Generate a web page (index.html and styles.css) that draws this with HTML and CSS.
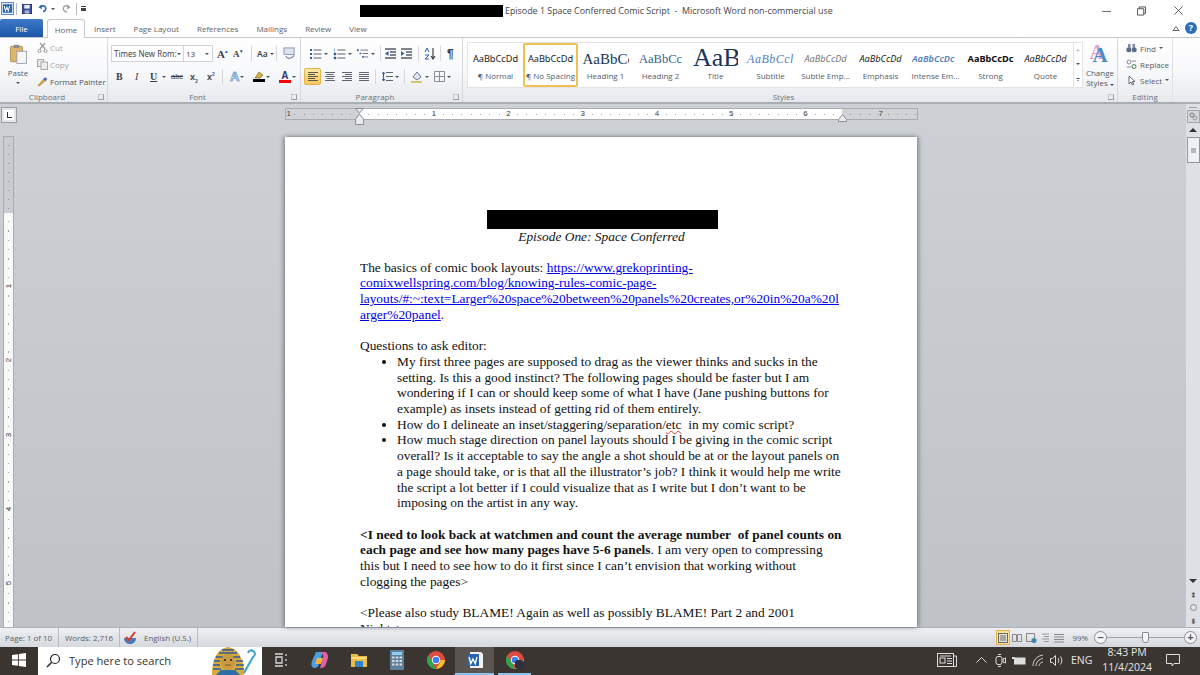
FILE: index.html
```html
<!DOCTYPE html>
<html lang="en">
<head>
    <meta charset="UTF-8">
    <title>Episode 1 Space Conferred Comic Script - Microsoft Word</title>
    <link rel="stylesheet" href="styles.css">
</head>
<body>
    <div class="titlebar">
        <div class="qat">
            <svg class="w-logo" width="13" height="13" viewBox="0 0 14 14"><rect x="0.5" y="0.5" width="13" height="13" fill="#dfe9f6" stroke="#5b86bd"/><rect x="2" y="2.5" width="10" height="9" fill="#2a62ad"/><path d="M3.5 4.5l1.3 5 1.6-4 1.4 4 1.5-5" fill="none" stroke="#fff" stroke-width="1.1"/></svg>
            <span class="qat-sep"></span>
            <svg class="qat-save" width="10" height="10" viewBox="0 0 11 11"><rect x="0.5" y="0.5" width="10" height="10" fill="#3d4f9e" stroke="#2a3570"/><rect x="2.5" y="1" width="6" height="4" fill="#e8ecf6"/><rect x="3" y="7" width="5" height="3.5" fill="#a9b3d3"/></svg>
            <svg class="qat-undo" width="9" height="9" viewBox="0 0 11 10"><path d="M3 2.5c3-1.6 6.5-.6 6.5 2.5 0 2-1.300 3.300-3.300 4" fill="none" stroke="#2e64ad" stroke-width="2"/><path d="M0.500 3.500L4.500 0V6z" fill="#2e64ad"/></svg>
            <span class="caret dark"></span>
            <svg class="qat-redo" width="9" height="9" viewBox="0 0 10 10"><path d="M7.500 2.500C4.500 .8 1.500 2.200 1.500 5c0 2.400 2 3.800 4.300 3.800" fill="none" stroke="#9c9fa3" stroke-width="1.500"/><path d="M9.500 3.500L5.500 .5V6z" fill="#9c9fa3"/></svg>
            <span class="qat-sep wide"></span>
            <span class="qat-more"></span>
        </div>
        <div class="redact-title"></div>
        <div class="doc-title">Episode 1 Space Conferred Comic Script&nbsp; -&nbsp; Microsoft Word non-commercial use</div>
        <div class="winctl">
            <svg class="ctl-min" width="9" height="10" viewBox="0 0 10 10"><path d="M0 5.500h10" stroke="#555" stroke-width="1"/></svg>
            <svg class="ctl-max" width="9" height="10" viewBox="0 0 10 10"><path d="M2.500 2.500V.5h7v7h-2M.5 2.500h7v7h-7z" fill="none" stroke="#444"/></svg>
            <svg class="ctl-close" width="9" height="9" viewBox="0 0 11 11"><path d="M.5 .5l10 10M10.500 .5l-10 10" stroke="#444"/></svg>
        </div>
    </div>

    <div class="tabs">
        <div class="tab-file">File</div>
        <div class="tab active">Home</div>
        <div class="tab">Insert</div>
        <div class="tab">Page Layout</div>
        <div class="tab">References</div>
        <div class="tab">Mailings</div>
        <div class="tab">Review</div>
        <div class="tab">View</div>
        <div class="tab-right">
            <svg width="8" height="7" viewBox="0 0 8 7"><path d="M1 5.500L4 1.500l3 4z" fill="none" stroke="#666"/></svg>
            <span class="help">?</span>
        </div>
    </div>

    <div class="ribbon">
        <section class="group g-clip">
            <div class="group-body clip-body">
                <div class="paste">
                    <svg width="19" height="21" viewBox="0 0 22 26"><rect x="1" y="3" width="15" height="19" rx="1" fill="#dcb46a" stroke="#a8843f"/><rect x="5" y="1" width="7" height="4" fill="#8d8d8d"/><rect x="9" y="9" width="12" height="15" fill="#f5f6f8" stroke="#8f96a3"/></svg>
                    <span class="paste-label">Paste</span>
                    <span class="caret dark"></span>
                </div>
                <div class="clip-list">
                    <div class="clip-item muted"><svg width="11" height="11" viewBox="0 0 11 11"><path d="M3 1l5 6M8 1L3 7" stroke="#999" stroke-width="1.200"/><circle cx="2.500" cy="9" r="1.500" fill="none" stroke="#999"/><circle cx="8.500" cy="9" r="1.500" fill="none" stroke="#999"/></svg>Cut</div>
                    <div class="clip-item muted"><svg width="11" height="11" viewBox="0 0 11 11"><rect x="0.500" y="0.500" width="6" height="7" fill="#e6e6e6" stroke="#aaa"/><rect x="4" y="3" width="6.500" height="7.500" fill="#eee" stroke="#aaa"/></svg>Copy</div>
                    <div class="clip-item"><svg width="11" height="11" viewBox="0 0 13 12"><path d="M1 11L7 4l2 2-6 5z" fill="#e0a92f" stroke="#8a6a20" stroke-width=".5"/><path d="M7 3l3-2 2 2-2 3z" fill="#4a6aa8"/></svg>Format Painter</div>
                </div>
            </div>
            <div class="group-label">Clipboard<span class="launch"></span></div>
        </section>

        <section class="group g-font">
            <div class="group-body tool-rows">
                <div class="tool-row font-row-1">
                    <div class="combo font-name">Times New Rom:<span class="caret dark"></span></div>
                    <div class="combo font-size">13<span class="caret dark"></span></div>
                    <div class="glyph grow">A<sup>▴</sup></div>
                    <div class="glyph shrink">A<sup>▾</sup></div>
                    <div class="tool-sep"></div>
                    <div class="glyph change-case">Aa<span class="caret dark"></span></div>
                    <div class="tool-sep"></div>
                    <svg class="clear-fmt" width="13" height="13" viewBox="0 0 14 14"><rect x="1" y="1" width="11" height="7" fill="#dfe3f0" stroke="#8a94b5"/><path d="M3 10c2 3 6 3 9-1" fill="none" stroke="#6b7ba8" stroke-width="1.300"/></svg>
                </div>
                <div class="tool-row font-row-2">
                    <b class="fmt f-b">B</b>
                    <i class="fmt f-i">I</i>
                    <span class="fmt f-u">U</span><span class="caret dark"></span>
                    <span class="fmt f-abc">abc</span>
                    <span class="fmt f-x">x<sub>2</sub></span>
                    <span class="fmt f-x">x<sup>2</sup></span>
                    <div class="tool-sep"></div>
                    <span class="fmt f-effect">A</span><span class="caret dark"></span>
                    <span class="swatch-tool"><svg width="12" height="8" viewBox="0 0 12 8"><path d="M2 7l4-6 4 3-3 3z" fill="#d8b13a" stroke="#6b5a20" stroke-width=".6"/></svg><span class="swatch black"></span></span><span class="caret dark"></span>
                    <span class="swatch-tool a-color"><span class="a-letter">A</span><span class="swatch red"></span></span><span class="caret dark"></span>
                </div>
            </div>
            <div class="group-label">Font<span class="launch"></span></div>
        </section>

        <section class="group g-para">
            <div class="group-body tool-rows">
                <div class="tool-row para-row-1">
                    <svg width="13" height="12" viewBox="0 0 13 12"><use href="#i-list"/></svg><span class="caret dark"></span>
                    <svg width="13" height="12" viewBox="0 0 13 12"><use href="#i-num"/></svg><span class="caret dark"></span>
                    <svg width="12" height="11" viewBox="0 0 14 12"><use href="#i-multi"/></svg><span class="caret dark"></span>
                    <div class="tool-sep"></div>
                    <svg width="11" height="12" viewBox="0 0 11 12"><use href="#i-outdent"/></svg>
                    <svg class="indent-i" width="11" height="12" viewBox="0 0 11 12"><use href="#i-indent"/></svg>
                    <div class="tool-sep s-a"></div>
                    <svg width="12" height="13" viewBox="0 0 12 13"><use href="#i-sort"/></svg>
                    <div class="tool-sep s-b"></div>
                    <span class="pilcrow">¶</span>
                </div>
                <div class="tool-row para-row-2">
                    <span class="align on"><svg width="10" height="9" viewBox="0 0 10 9"><use href="#i-left"/></svg></span>
                    <span class="align"><svg width="10" height="9" viewBox="0 0 10 9"><use href="#i-center"/></svg></span>
                    <span class="align"><svg width="10" height="9" viewBox="0 0 10 9"><use href="#i-right"/></svg></span>
                    <span class="align"><svg width="10" height="9" viewBox="0 0 10 9"><use href="#i-just"/></svg></span>
                    <div class="tool-sep"></div>
                    <svg width="11" height="11" viewBox="0 0 11 11"><use href="#i-spacing"/></svg><span class="caret dark"></span>
                    <div class="tool-sep"></div>
                    <svg width="13" height="12" viewBox="0 0 13 12"><path d="M3 6l4-5 4 5-4 3z" fill="#dfe8f2" stroke="#6c7a8f"/><path d="M1 11h11" stroke="#d9c36c" stroke-width="2"/></svg><span class="caret dark"></span>
                    <svg width="11" height="11" viewBox="0 0 11 11"><path d="M.5 .5h10v10H.5zM5.500 .5v10M.5 5.500h10" fill="none" stroke="#8a8f97"/></svg><span class="caret dark"></span>
                </div>
            </div>
            <div class="group-label">Paragraph<span class="launch"></span></div>
        </section>

        <section class="group g-styles">
            <div class="group-body styles-body">
                <div class="gallery">
                    <div class="style-item"><span class="s-sample s-normal">AaBbCcDd</span><span class="s-name">¶ Normal</span></div>
                    <div class="style-item selected"><span class="s-sample s-normal">AaBbCcDd</span><span class="s-name">¶ No Spacing</span></div>
                    <div class="style-item"><span class="s-sample s-h1">AaBbCc</span><span class="s-name">Heading 1</span></div>
                    <div class="style-item"><span class="s-sample s-h2">AaBbCc</span><span class="s-name">Heading 2</span></div>
                    <div class="style-item"><span class="s-sample s-title">AaB</span><span class="s-name">Title</span></div>
                    <div class="style-item"><span class="s-sample s-sub">AaBbCcl</span><span class="s-name">Subtitle</span></div>
                    <div class="style-item"><span class="s-sample s-subtle">AaBbCcDd</span><span class="s-name">Subtle Emp...</span></div>
                    <div class="style-item"><span class="s-sample s-emph">AaBbCcDd</span><span class="s-name">Emphasis</span></div>
                    <div class="style-item"><span class="s-sample s-intense">AaBbCcDc</span><span class="s-name">Intense Em...</span></div>
                    <div class="style-item"><span class="s-sample s-strong">AaBbCcDc</span><span class="s-name">Strong</span></div>
                    <div class="style-item"><span class="s-sample s-emph">AaBbCcDd</span><span class="s-name">Quote</span></div>
                    <div class="gallery-arrows"><span class="caret up"></span><span class="caret dark"></span><span class="caret more"></span></div>
                </div>
                <div class="change-styles">
                    <span class="cs-icon">A</span>
                    <span>Change</span>
                    <span>Styles <i class="caret dark"></i></span>
                </div>
            </div>
            <div class="group-label">Styles<span class="launch"></span></div>
        </section>

        <section class="group g-edit">
            <div class="group-body edit-list">
                <div><svg width="11" height="10" viewBox="0 0 11 10"><circle cx="2.800" cy="6.800" r="2.500" fill="#5a6b86"/><circle cx="8.200" cy="6.800" r="2.500" fill="#5a6b86"/><rect x="2" y="1" width="2.500" height="4" fill="#7c8ba3"/><rect x="6.500" y="1" width="2.500" height="4" fill="#7c8ba3"/></svg>Find <i class="caret dark"></i></div>
                <div><svg width="11" height="10" viewBox="0 0 11 10"><circle cx="3" cy="3" r="2" fill="none" stroke="#889"/><circle cx="8" cy="7.500" r="2" fill="none" stroke="#3a8a4a"/><path d="M1 8h4M6 2h4" stroke="#889"/></svg>Replace</div>
                <div><svg width="11" height="11" viewBox="0 0 11 11"><path d="M3 1v8l2-2 1.500 3 1.200-.6L6.300 6.500H9z" fill="#fff" stroke="#667"/></svg>Select <i class="caret dark"></i></div>
            </div>
            <div class="group-label">Editing</div>
        </section>
    </div>

    <div class="workspace">
        <aside class="vbar">
            <div class="corner"><span></span></div>
            <div class="vruler">
                <div class="vr-top"></div>
                <div class="vr-white">
                    <span class="vn">1</span><span class="vn">2</span><span class="vn">3</span><span class="vn">4</span><span class="vn">5</span>
                </div>
            </div>
        </aside>

        <main class="canvas">
            <div class="hruler">
                <span class="hr-grey"><b class="hn first">1</b></span>
                <span class="hr-white">
                    <b class="hn">1</b><b class="hn">2</b><b class="hn">3</b><b class="hn">4</b><b class="hn">5</b><b class="hn">6</b>
                </span>
                <span class="hr-grey end"><b class="hn last">7</b></span>
                <svg class="marker m-left" width="9" height="18" viewBox="0 0 9 18"><path d="M.5 .5h8L4.500 5zM4.500 6l4 5v5.500h-8V11z" fill="#e9ebee" stroke="#8b8f96"/></svg>
                <svg class="marker m-right" width="9" height="8" viewBox="0 0 9 8"><path d="M4.500 .5l4 5v2h-8v-2z" fill="#e9ebee" stroke="#8b8f96"/></svg>
            </div>
            <article class="page">
                <div class="redact-heading"></div>
                <p class="doc-sub">Episode One: Space Conferred</p>
                <p class="doc-p">The basics of comic book layouts: <a href="#">https://www.grekoprinting-<br>comixwellspring.com/blog/knowing-rules-comic-page-<br>layouts/#:~:text=Larger%20space%20between%20panels%20creates,or%20in%20a%20l<br>arger%20panel</a>.</p>
                <p class="doc-p gap">Questions to ask editor:</p>
                <ul class="doc-list">
                    <li>My first three pages are supposed to drag as the viewer thinks and sucks in the<br>setting. Is this a good instinct? The following pages should be faster but I am<br>wondering if I can or should keep some of what I have (Jane pushing buttons for<br>example) as insets instead of getting rid of them entirely.</li>
                    <li>How do I delineate an inset/staggering/separation/<span class="squiggle">etc</span>&nbsp; in my comic script?</li>
                    <li>How much stage direction on panel layouts should I be giving in the comic script<br>overall? Is it acceptable to say the angle a shot should be at or the layout panels on<br>a page should take, or is that all the illustrator’s job? I think it would help me write<br>the script a lot better if I could visualize that as I write but I don’t want to be<br>imposing on the artist in any way.</li>
                </ul>
                <p class="doc-p gap"><b>&lt;I need to look back at watchmen and count the average number&nbsp; of panel counts on<br>each page and see how many pages have 5-6 panels</b>. I am very open to compressing<br>this but I need to see how to do it first since I can’t envision that working without<br>clogging the pages&gt;</p>
                <p class="doc-p gap">&lt;Please also study BLAME! Again as well as possibly BLAME! Part 2 and 2001<br>Nights&gt;</p>
            </article>
        </main>

        <aside class="scrollbar">
            <div class="sb-grip"></div>
            <div class="sb-toggle"><svg width="9" height="9" viewBox="0 0 9 9"><circle cx="3" cy="3" r="2" fill="none" stroke="#777"/><circle cx="6" cy="6" r="2" fill="none" stroke="#999"/></svg></div>
            <span class="sb-arrow up"></span>
            <div class="sb-thumb"><span></span></div>
            <div class="sb-track"></div>
            <span class="sb-arrow down"></span>
            <span class="sb-nav">⇞</span>
            <span class="sb-nav dot"></span>
            <span class="sb-nav">⇟</span>
        </aside>
    </div>

    <div class="statusbar">
        <span class="st-cell">Page: 1 of 10</span>
        <span class="st-cell">Words: 2,716</span>
        <span class="st-cell lang">
            <svg width="14" height="14" viewBox="0 0 14 14"><path d="M1 7c0 4 3 6 6 6 3 0 6-2 6-6z" fill="#4e79b8"/><path d="M3 6l3 3 6-8" fill="none" stroke="#d8392c" stroke-width="2"/></svg>
            English (U.S.)
        </span>
        <div class="st-right">
            <span class="view on"><svg width="10" height="10" viewBox="0 0 10 10"><use href="#i-view"/></svg></span>
            <span class="view"><svg width="10" height="10" viewBox="0 0 10 10"><path d="M.5 1.500h4v7h-4zM5.500 1.500h4v7h-4z" fill="none" stroke="#888"/></svg></span>
            <span class="view"><svg width="11" height="10" viewBox="0 0 11 10"><path d="M.5 .5h8v8h-8z" fill="none" stroke="#888"/><circle cx="8" cy="7.500" r="2.500" fill="#3c87a8"/></svg></span>
            <span class="view"><svg width="10" height="10" viewBox="0 0 10 10"><path d="M2 1h7M4 3.500h5M2 6h7M4 8.500h5" stroke="#999"/></svg></span>
            <span class="view"><svg width="10" height="10" viewBox="0 0 10 10"><path d="M0 1.500h10M0 4h10M0 6.500h10M0 9h10" stroke="#888"/></svg></span>
            <span class="zoom-pct">99%</span>
            <span class="zoom-btn">–</span>
            <span class="zoom-track"><i></i></span>
            <span class="zoom-btn">+</span>
        </div>
    </div>

    <footer class="taskbar">
        <div class="start"><svg width="14" height="14" viewBox="0 0 16 16"><path d="M0 2.300l6.800-1v6.200H0zM7.800 1.100L16 0v7.500H7.800zM0 8.500h6.800v6.200l-6.800-1zM7.800 8.500H16V16l-8.200-1.100z" fill="#fff"/></svg></div>
        <div class="search">
            <svg width="15" height="15" viewBox="0 0 15 15"><circle cx="9" cy="6" r="4.500" fill="none" stroke="#222" stroke-width="1.200"/><path d="M5.800 9.200L1 14" stroke="#222" stroke-width="1.400"/></svg>
            <span class="search-text">Type here to search</span>
            <svg class="pharaoh" width="48" height="28" viewBox="0 0 48 28">
                <path d="M2 28C2 14 6 2 18 0c12 2 16 14 16 28z" fill="#d9a93a"/>
                <path d="M6 10l24 0M4 14l6 0M26 14l7 0M3 18l7 0M26 18l8 0M3 22l8 0M25 22l9 0M9 6l18 0M12 3l12 0" stroke="#2b5a9e" stroke-width="1.500"/>
                <ellipse cx="18" cy="15" rx="7" ry="8" fill="#c99a3f"/>
                <circle cx="15" cy="13" r="1.100" fill="#222"/><circle cx="21" cy="13" r="1.100" fill="#222"/>
                <path d="M15 18h6" stroke="#7a5a20"/>
                <path d="M6 28l5-5h14l5 5z" fill="#2d6ea8"/>
                <path d="M38 6a3.500 3.500 0 1 1 5 4L34 26" fill="none" stroke="#39a3c8" stroke-width="2"/>
            </svg>
        </div>
        <div class="tb-icons">
            <span class="tb"><svg width="14" height="14" viewBox="0 0 14 14"><path d="M1 1h8M1 13h8M2 4h6v6H2zM12 1v2M12 6v2M12 11v2" fill="none" stroke="#d8d8d8" stroke-width="1.300"/></svg></span>
            <span class="tb"><svg width="20" height="20" viewBox="0 0 20 20"><path d="M6 2h7l-4 12c-1 3-2 4-5 4-3-1-3-4-2-7z" fill="#4aa0e0"/><path d="M8 2h6c3 0 4 2 4 6l-2 6c-1 3-3 4-6 4l3-10c1-3-1-6-5-6z" fill="#e35ea8"/><path d="M7 8h6l-2 6H5z" fill="#f3b33d"/></svg></span>
            <span class="tb"><svg width="18" height="16" viewBox="0 0 18 16"><path d="M1 2h6l2 2h8v11H1z" fill="#e9bd46"/><rect x="5" y="9" width="8" height="6" fill="#2f83cf"/><rect x="1" y="5" width="16" height="2" fill="#f6d980"/></svg></span>
            <span class="tb"><svg width="14" height="20" viewBox="0 0 14 20"><rect width="14" height="20" fill="#5f7f9a"/><rect x="2" y="2" width="10" height="3" fill="#8fd0ee"/><path d="M2 7.500h10M2 11h10M2 14.500h10" stroke="#d5dde4" stroke-width="2" stroke-dasharray="2.500 1.300"/></svg></span>
            <span class="tb"><svg width="18" height="18" viewBox="0 0 18 18"><use href="#i-chrome"/></svg></span>
            <span class="tb word-open"><svg width="18" height="18" viewBox="0 0 18 18"><path d="M4 1h11l2 2v14H4z" fill="#f2f2f2"/><rect x="1" y="3" width="12" height="12" fill="#2a62ad"/><path d="M3 6l1.800 6.500L7 8l2.200 4.500L11 6" fill="none" stroke="#fff" stroke-width="1.400"/></svg></span>
            <span class="tb chrome-open"><svg width="18" height="18" viewBox="0 0 18 18"><use href="#i-chrome"/><rect x="9" y="9" width="9" height="9" rx="3" fill="#2c3140"/></svg></span>
        </div>
        <div class="tray">
            <svg class="tray-news" width="20" height="14" viewBox="0 0 20 14"><rect x=".5" y=".5" width="16" height="13" fill="none" stroke="#ddd"/><path d="M17 3h2.500v10.500H3" fill="none" stroke="#ddd"/><rect x="3" y="5" width="5" height="5" fill="none" stroke="#ddd"/><path d="M10 5.500h5M10 8h5M10 10.500h5M3 3h11" stroke="#ddd"/></svg>
            <svg class="tray-i chev" width="11" height="6" viewBox="0 0 11 6"><path d="M.5 5.500l5-5 5 5" fill="none" stroke="#ddd"/></svg>
            <svg class="tray-i" width="11" height="13" viewBox="0 0 11 13"><rect x="1" y="2.500" width="6" height="8" rx="2" fill="none" stroke="#ddd"/><path d="M8 5l2.500-1v5L8 8zM3 .5h3M3 12.500h3" fill="none" stroke="#ddd"/></svg>
            <svg class="tray-i" width="14" height="9" viewBox="0 0 14 9"><rect x="2" y="1.500" width="11.500" height="7" fill="#ddd"/><path d="M0 1h3v2H0z" fill="#ddd"/></svg>
            <svg class="tray-i" width="12" height="12" viewBox="0 0 12 12"><path d="M1 12C1 6 5 2 11 1M4 12C4 8 7 5 11 4.500M7 12c0-2 2-4 4-4" fill="none" stroke="#cfcfcf"/></svg>
            <svg class="tray-i" width="13" height="11" viewBox="0 0 13 11"><path d="M.5 3.500h2l3-3v10l-3-3h-2zM8 3c1 1.500 1 3.500 0 5M10.500 1.500c1.800 2.500 1.800 5.500 0 8" fill="none" stroke="#ddd"/></svg>
            <span class="tray-lang">ENG</span>
            <div class="clock"><span>8:43 PM</span><span>11/4/2024</span></div>
            <svg class="tray-note" width="14" height="13" viewBox="0 0 14 13"><path d="M.5 .5h13v9H8l-2 2.500V9.500H.5z" fill="none" stroke="#ddd"/></svg>
        </div>
    </footer>

    <svg class="defs" width="0" height="0">
        <defs>
            <g id="i-list"><path d="M4.500 2h8M4.500 6h8M4.500 10h8" stroke="#5b6270"/><path d="M1 1h2v2H1zM1 5h2v2H1zM1 9h2v2H1z" fill="#2f5fa5"/></g>
            <g id="i-num"><path d="M4.500 2h8M4.500 6h8M4.500 10h8" stroke="#5b6270"/><path d="M1.500 .5v3M1 5h2v2H1zM1 9h2v2H1z" fill="#2f5fa5" stroke="#2f5fa5" stroke-width=".5"/></g>
            <g id="i-multi"><path d="M4 2h9M6.500 6h6.500M8.500 10h4.500" stroke="#5b6270"/><path d="M0 1h2v2H0zM3 5h2v2H3zM6 9h2v2H6z" fill="#2f5fa5"/></g>
            <g id="i-outdent"><path d="M0 1h11M5 4h6M5 7h6M0 10h11" stroke="#565c68" stroke-width="1.300"/><path d="M0 5.500L3.500 3v5z" fill="#2f5fa5"/></g>
            <g id="i-indent"><path d="M0 1h11M5 4h6M5 7h6M0 10h11" stroke="#565c68" stroke-width="1.300"/><path d="M3.500 5.500L0 3v5z" fill="#2f5fa5"/></g>
            <g id="i-sort"><path d="M1 5l2-4 2 4M1 8h4l-4 4h4" fill="none" stroke="#2f5fa5"/><path d="M9 1v10M7 9l2 3 2-3" fill="none" stroke="#444" stroke-width="1.200"/></g>
            <g id="i-left"><path d="M0 .5h10M0 2.500h7M0 4.500h10M0 6.500h7M0 8.500h10" stroke="#5e5a4a"/></g>
            <g id="i-center"><path d="M0 .5h10M1.500 2.500h7M0 4.500h10M1.500 6.500h7M0 8.500h10" stroke="#5f6672"/></g>
            <g id="i-right"><path d="M0 .5h10M3 2.500h7M0 4.500h10M3 6.500h7M0 8.500h10" stroke="#5f6672"/></g>
            <g id="i-just"><path d="M0 .5h10M0 2.500h10M0 4.500h10M0 6.500h10M0 8.500h10" stroke="#5f6672"/></g>
            <g id="i-spacing"><path d="M4 1.500h7M4 5.500h7M4 9.500h7" stroke="#5b6270"/><path d="M1.500 1v9M0 3l1.500-2L3 3M0 8l1.500 2L3 8" fill="none" stroke="#2f5fa5"/></g>
            <g id="i-view"><rect x=".5" y=".5" width="9" height="9" fill="#e8e6d8" stroke="#666"/><path d="M2 3h6M2 5h6M2 7h6" stroke="#666"/></g>
            <g id="i-chrome"><circle cx="9" cy="9" r="9" fill="#dd4b3e"/><path d="M9 18A9 9 0 0 1 1.200 4.500L5.500 11z" fill="#2fa44f"/><path d="M9 18l4.500-7.500-1-1.500H18a9 9 0 0 1-9 9z" fill="#f6c01f"/><circle cx="9" cy="9" r="4.200" fill="#fff"/><circle cx="9" cy="9" r="3.300" fill="#3f7fe8"/></g>
        </defs>
    </svg>
</body>
</html>
```

FILE: styles.css
```css
* {
    box-sizing: border-box;
}
html, body {
    margin: 0;
    height: 675px;
    overflow: hidden;
}
body {
    width: 1200px;
    background: #fff;
    font-family: "Open Sans", "Noto Sans", sans-serif;
    font-size: 8px;
    color: #555b66;
}
.defs {
    position: absolute;
}

/* shared bits */
.caret {
    display: inline-block;
    width: 0;
    height: 0;
    border-left: 2px solid transparent;
    border-right: 2px solid transparent;
    border-top: 2.5px solid #666;
    flex: none;
}
.caret.dark {
    border-top-color: #4a4f59;
}
.caret.up {
    border-top: 0;
    border-bottom: 2.5px solid #b5b9c0;
}
.caret.more {
    border-top: 3px double #4a4f59;
}

/* title bar */
.titlebar {
    height: 19px;
    display: flex;
    align-items: center;
    padding-top: 2px;
    background: #fff;
}
.qat {
    width: 360px;
    display: flex;
    align-items: center;
    padding-left: 1px;
    margin-top: -4px;
    flex: none;
}
.qat svg {
    flex: none;
}
.qat-sep {
    width: 1px;
    height: 12px;
    background: #b8bcc4;
    margin: 0 5px 0 2px;
}
.qat-sep.wide {
    margin: 0 4px 0 5px;
}
.qat-save {
    margin-right: 6px;
}
.qat-undo {
    margin-right: 4px;
}
.qat .caret {
    margin-right: 7px;
}
.qat-more {
    width: 5px;
    height: 5px;
    border-top: 1px solid #444;
    border-bottom: 3px solid #444;
}
.redact-title {
    width: 143px;
    height: 12px;
    background: #000;
    flex: none;
}
.doc-title {
    margin-left: 2px;
    margin-top: -1px;
    font-size: 8.9px;
    color: #3f444d;
    white-space: nowrap;
}
.winctl {
    margin-left: auto;
    display: flex;
    align-items: center;
}
.ctl-min {
    margin-right: 26px;
}
.ctl-max {
    margin-right: 28px;
}
.ctl-close {
    margin-right: 17px;
}

/* tabs */
.tabs {
    height: 19px;
    display: flex;
    align-items: stretch;
    border-bottom: 1px solid #c6cad0;
    background: #fff;
    color: #5b616c;
    font-size: 8px;
}
.tab-file {
    width: 43px;
    height: 18px;
    background: linear-gradient(#3f79c8, #1d56a8);
    border-radius: 2px 2px 0 0;
    color: #fff;
    display: flex;
    align-items: center;
    justify-content: center;
}
.tab {
    display: flex;
    align-items: center;
    padding: 1px 9px 0;
}
.tab.active {
    width: 38px;
    margin-left: 4px;
    height: 19px;
    padding: 1px 0 0;
    justify-content: center;
    border: 1px solid #c6cad0;
    border-bottom: 0;
    border-radius: 3px 3px 0 0;
    background: #fff;
    position: relative;
    z-index: 1;
}
.tab-right {
    margin-left: auto;
    display: flex;
    align-items: center;
    gap: 5px;
    padding-right: 3px;
}
.help {
    width: 12px;
    height: 12px;
    border-radius: 50%;
    background: #2f6db8;
    color: #fff;
    font-size: 9px;
    font-weight: 700;
    line-height: 12px;
    text-align: center;
}

/* ribbon */
.ribbon {
    height: 66px;
    display: flex;
    background: linear-gradient(#fff 0, #f7f8fa 55%, #e6e8ec 100%);
    border-bottom: 2px solid #a9adb4;
}
.group {
    display: flex;
    flex-direction: column;
    border-right: 1px solid #d5d8dd;
    flex: none;
}
.g-clip { width: 108px; }
.g-font { width: 193px; }
.g-para { width: 162px; }
.g-styles { width: 655px; }
.g-edit { width: 55px; border-right: 1px solid #dfe1e5; }
.group-body {
    flex: 1;
    min-height: 0;
}
.group-label {
    height: 12px;
    line-height: 12px;
    text-align: center;
    padding-right: 13px;
    color: #6c717b;
    position: relative;
    top: 1px;
}
.g-edit .group-label {
    padding-right: 0;
}
.launch {
    position: absolute;
    right: 3px;
    top: 3px;
    width: 6px;
    height: 6px;
    border: 1px solid #9a9ea6;
    border-top-color: #c5c8cd;
    border-left-color: #c5c8cd;
}

/* clipboard */
.clip-body {
    display: flex;
}
.paste {
    width: 36px;
    flex: none;
    display: flex;
    flex-direction: column;
    align-items: center;
    padding-top: 6px;
    color: #555b66;
}
.paste-label {
    margin: 2px 0 3px;
    line-height: 12px;
}
.clip-list {
    display: flex;
    flex-direction: column;
    padding: 3px 0 0 1px;
    gap: 4px;
    white-space: nowrap;
}
.clip-item {
    height: 13px;
    display: flex;
    align-items: center;
    gap: 2px;
    color: #4f5560;
}
.clip-item.muted {
    color: #a2a6ad;
}

/* font + paragraph tools */
.tool-rows {
    display: flex;
    flex-direction: column;
    padding-top: 7px;
    gap: 6px;
}
.tool-row {
    height: 17px;
    display: flex;
    align-items: center;
}
.tool-row svg {
    flex: none;
}
.tool-sep {
    width: 1px;
    height: 15px;
    background: #d5d8dd;
    flex: none;
}
.font-row-1 {
    padding-left: 3px;
}
.combo {
    height: 17px;
    border: 1px solid #d0d3d9;
    background: #fff;
    display: flex;
    align-items: center;
    justify-content: space-between;
    padding: 0 3px 0 2px;
    color: #444;
    font-size: 8px;
    white-space: nowrap;
    overflow: hidden;
    flex: none;
}
.font-name {
    width: 73px;
    font-family: "Noto Sans", sans-serif;
}
.font-size {
    width: 30px;
    margin-left: -1px;
}
.glyph {
    color: #444;
    font-family: "Liberation Serif", serif;
    font-weight: 700;
    flex: none;
}
.glyph sup {
    color: #2f5fa5;
    font-size: 5px;
    line-height: 0;
}
.grow {
    font-size: 11px;
    margin-left: 4px;
    width: 12px;
}
.shrink {
    font-size: 9px;
    margin: 0 6px 0 4px;
    width: 12px;
}
.change-case {
    font-size: 8.5px;
    font-family: "Noto Sans", sans-serif;
    font-weight: 600;
    margin: 0 2px 0 5px;
    display: flex;
    align-items: center;
    gap: 2px;
}
.clear-fmt {
    margin-left: 6px;
}
.font-row-2 {
    padding-left: 7px;
}
.fmt {
    color: #3d3f45;
    font-family: "Liberation Serif", serif;
    font-size: 10px;
    flex: none;
}
.f-b, .f-i {
    width: 17px;
}
.f-b {
    padding-left: 1px;
}
.f-i {
    padding-left: 3px;
}
.f-u {
    text-decoration: underline;
    font-weight: 700;
    width: 12px;
    padding-left: 1px;
}
.font-row-2 .caret {
    margin: 0 5px 0 1px;
}
.f-abc {
    width: 17px;
    font-family: "Liberation Sans", sans-serif;
    font-size: 7.5px;
    text-decoration: line-through;
}
.f-x {
    width: 17px;
    padding-left: 2px;
    font-family: "Liberation Sans", sans-serif;
    font-weight: 700;
    font-size: 9px;
}
.f-x sub, .f-x sup {
    font-size: 5px;
    color: #2f5fa5;
    line-height: 0;
}
.font-row-2 .tool-sep {
    margin: 0 7px 0 0;
}
.f-effect {
    font-family: "Liberation Sans", sans-serif;
    font-weight: 700;
    font-size: 13px;
    color: #cfe2f6;
    -webkit-text-stroke: 0.6px #3f83c8;
}
.swatch-tool {
    width: 13px;
    display: flex;
    flex-direction: column;
    align-items: center;
    flex: none;
    margin-left: 3px;
}
.swatch {
    width: 12px;
    height: 3px;
}
.swatch.black {
    background: #000;
}
.swatch.red {
    background: #f00;
}
.a-letter {
    font: 700 10px/9px "Liberation Sans", sans-serif;
    color: #2b3a7a;
}
.para-row-1 {
    padding-left: 8px;
}
.para-row-1 .caret {
    margin: 0 5px 0 2px;
}
.para-row-1 .tool-sep {
    margin: 0 4px 0 0;
}
.indent-i {
    margin-left: 5px;
}
.para-row-1 .s-a {
    margin: 0 5px 0 6px;
}
.para-row-1 .s-b {
    margin: 0 0 0 4px;
}
.pilcrow {
    font: 700 12px "Liberation Sans", sans-serif;
    color: #444;
    margin-left: 6px;
}
.para-row-2 {
    padding-left: 3px;
}
.align {
    width: 17px;
    height: 17px;
    display: flex;
    align-items: center;
    justify-content: center;
    flex: none;
}
.align.on {
    background: linear-gradient(#fde9a8, #f8c95b);
    border: 1px solid #e3b44a;
    border-radius: 2px;
}
.para-row-2 .tool-sep {
    margin: 0 6px 0 3px;
}
.para-row-2 .tool-sep + svg + .caret + .tool-sep {
    margin: 0 5px 0 0;
}
.para-row-2 .caret {
    margin: 0 5px 0 2px;
}

/* styles gallery */
.styles-body {
    display: flex;
    padding: 4px 0 2px 4px;
}
.gallery {
    height: 46px;
    width: 616px;
    flex: none;
    display: flex;
    background: #fff;
    border: 1px solid #e2e4e8;
}
.style-item {
    width: 55px;
    height: 44px;
    flex: none;
    display: flex;
    flex-direction: column;
    align-items: center;
    overflow: hidden;
    white-space: nowrap;
}
.style-item.selected {
    box-shadow: inset 0 0 0 2px #f2c153;
    border-radius: 2px;
}
.s-sample {
    height: 26px;
    line-height: 32px;
    font-size: 9.2px;
    color: #222;
    font-family: "Noto Sans", sans-serif;
    flex: none;
}
.s-name {
    line-height: 14px;
    color: #555b66;
}
.s-h1 {
    font-family: "Liberation Serif", serif;
    font-size: 15px;
    color: #17365d;
    width: 46px;
    overflow: hidden;
}
.s-h2 {
    font-family: "Liberation Serif", serif;
    font-size: 12.5px;
    color: #366092;
}
.s-title {
    font-family: "Liberation Serif", serif;
    font-size: 26px;
    color: #17365d;
    line-height: 30px;
    width: 45px;
    overflow: hidden;
}
.s-sub {
    font-family: "Liberation Serif", serif;
    font-style: italic;
    font-size: 12px;
    letter-spacing: .5px;
    color: #4f81bd;
}
.s-subtle {
    font-style: italic;
    color: #777;
}
.s-emph {
    font-style: italic;
    color: #222;
}
.s-intense {
    font-style: italic;
    font-weight: 600;
    color: #4f81bd;
    width: 47px;
    overflow: hidden;
}
.s-strong {
    font-weight: 700;
    color: #111;
}
.gallery-arrows {
    margin-left: auto;
    width: 10px;
    height: 44px;
    display: flex;
    flex-direction: column;
    align-items: center;
    justify-content: space-around;
    border-left: 1px solid #e2e4e8;
}
.change-styles {
    flex: 1;
    display: flex;
    flex-direction: column;
    align-items: center;
    line-height: 10px;
    color: #555b66;
}
.cs-icon {
    font: 700 21px/26px "Liberation Serif", serif;
    color: #4a8ac9;
    text-shadow: -3px -3px 0 rgba(200, 77, 176, .55);
    height: 27px;
}
.edit-list {
    display: flex;
    flex-direction: column;
    padding: 3px 0 0 8px;
    gap: 2px;
}
.edit-list div {
    height: 14px;
    display: flex;
    align-items: center;
    gap: 3px;
    white-space: nowrap;
}

/* workspace */
.workspace {
    height: 523px;
    display: flex;
    background: linear-gradient(#cdd0d5, #bfc2c7);
}
.vbar {
    width: 18px;
    flex: none;
    padding: 3px 0 0 1px;
}
.corner {
    width: 16px;
    height: 16px;
    border: 1px solid #9a9da3;
    padding: 2px;
    background: #e3e5e8;
}
.corner span {
    display: block;
    height: 10px;
    background: #fff;
    position: relative;
}
.corner span::after {
    content: "";
    position: absolute;
    left: 3px;
    top: 2px;
    width: 4px;
    height: 5px;
    border-left: 1.500px solid #333;
    border-bottom: 1.500px solid #333;
}
.vruler {
    width: 11px;
    margin: 13px 0 0 2px;
    height: 491px;
    display: flex;
    flex-direction: column;
    border: 1px solid #a9acb2;
    border-bottom: 0;
}
.vr-top {
    height: 76px;
    flex: none;
    background: repeating-linear-gradient(#c9ccd1 0 8px, #8d9096 8px 9px) center / 1px 100% no-repeat, #c9ccd1;
}
.vr-white {
    flex: 1;
    background: repeating-linear-gradient(#fff 0 8px, #a0a3a8 8px 9.300px) center / 1px 100% no-repeat, #f8f8f9;
    padding-top: 1px;
    overflow: hidden;
}
.vn {
    display: block;
    height: 74.300px;
    width: 9px;
    font: 8px/9px "Liberation Sans", sans-serif;
    color: #444;
    writing-mode: vertical-rl;
    transform: rotate(180deg);
}
.canvas {
    flex: 1;
    min-width: 0;
    padding-left: 267px;
    display: flex;
    flex-direction: column;
}
.hruler {
    width: 633px;
    height: 12px;
    margin-top: 4px;
    flex: none;
    display: flex;
    border: 1px solid #a9acb2;
    position: relative;
    background: #d0d2d6;
}
.hr-grey {
    width: 74px;
    flex: none;
    display: flex;
    background: repeating-linear-gradient(90deg, transparent 0 8.300px, #8d9096 8.300px 9.300px) center / 100% 1px no-repeat;
}
.hr-grey.end {
    flex: 1;
}
.hr-white {
    width: 482px;
    flex: none;
    display: flex;
    padding-left: 2px;
    background: repeating-linear-gradient(90deg, transparent 0 8.300px, #9b9ea3 8.300px 9.300px) center / 100% 1px no-repeat, #fff;
}
.hn {
    width: 74.300px;
    flex: none;
    text-align: right;
    font: 8px/10px "Liberation Sans", sans-serif;
    color: #444;
}
.hn.first {
    width: 5px;
}
.hn.last {
    width: 41px;
}
.marker {
    position: absolute;
}
.m-left {
    left: 69px;
    top: -1px;
}
.m-right {
    left: 552px;
    top: 5px;
}
.page {
    width: 632px;
    margin-top: 17px;
    flex: 1;
    min-height: 0;
    background: #fff;
    overflow: hidden;
    padding: 73px 0 0 75px;
    box-shadow: -2px 0 4px rgba(90, 95, 105, .55), 2px 0 4px rgba(90, 95, 105, .55);
    font-family: "Liberation Serif", serif;
    font-size: 13.400px;
    line-height: 15.700px;
    color: #111;
    white-space: nowrap;
}
.redact-heading {
    width: 231px;
    height: 19px;
    background: #000;
    margin-left: 127px;
}
.doc-sub {
    margin: 0 0 15px;
    width: 483px;
    text-align: center;
    font-style: italic;
}
.doc-p {
    margin: 0;
}
.doc-p.gap {
    margin-top: 15.700px;
}
.doc-p a {
    color: #0000ee;
    text-decoration: underline;
}
.doc-list {
    margin: 0;
    padding: 0 0 0 37px;
}
.squiggle {
    text-decoration: underline wavy #d33;
    text-decoration-thickness: 1px;
}

/* scrollbar */
.scrollbar {
    width: 14px;
    flex: none;
    background: #dde1e6;
    display: flex;
    flex-direction: column;
    align-items: center;
    padding-top: 3px;
}
.sb-grip {
    width: 8px;
    height: 1px;
    background: #9a9da3;
    margin-bottom: 2px;
}
.sb-toggle {
    width: 13px;
    height: 13px;
    border: 1px solid #a4a7ad;
    background: #d5d7db;
    display: flex;
    align-items: center;
    justify-content: center;
}
.sb-arrow {
    width: 0;
    height: 0;
    border-left: 4px solid transparent;
    border-right: 4px solid transparent;
    flex: none;
}
.sb-arrow.up {
    border-bottom: 4px solid #333;
    margin: 5px 0 5px;
}
.sb-arrow.down {
    border-top: 4px solid #333;
    margin-bottom: 5px;
}
.sb-thumb {
    width: 13px;
    height: 26px;
    border: 1px solid #94979e;
    background: #eef0f3;
    display: flex;
    align-items: center;
    justify-content: center;
}
.sb-thumb span {
    width: 5px;
    height: 5px;
    background: #b3b6bb;
}
.sb-track {
    flex: 1;
}
.sb-nav {
    height: 13px;
    line-height: 13px;
    font-size: 8px;
    color: #444;
    text-align: center;
}
.sb-nav.dot {
    width: 7px;
    height: 7px;
    margin: 3px 0;
    border: 1.500px solid #8a8d93;
    border-radius: 50%;
}

/* status bar */
.statusbar {
    height: 20px;
    display: flex;
    align-items: stretch;
    background: linear-gradient(#eef0f3, #d5d8dd);
    border-top: 1px solid #aeb1b7;
    color: #5a5f69;
    font-size: 7.900px;
}
.st-cell {
    display: flex;
    align-items: center;
    gap: 7px;
    padding: 0 6px 0 5px;
    border-right: 1px solid #b9bcc2;
    white-space: nowrap;
}
.st-cell.lang {
    padding-left: 3px;
}
.st-cell:nth-child(2) {
    padding: 0 6px;
}
.st-right {
    margin-left: auto;
    display: flex;
    align-items: center;
    padding-right: 3px;
}
.view {
    width: 14px;
    height: 18px;
    display: flex;
    align-items: center;
    justify-content: center;
}
.view.on {
    width: 14px;
    height: 15px;
    border: 1px solid #e3b44a;
    background: #fbe29a;
}
.zoom-pct {
    margin: 0 6px 0 6px;
}
.zoom-btn {
    width: 13px;
    height: 13px;
    border: 1px solid #8a8d93;
    border-radius: 50%;
    background: #f4f5f7;
    font: 700 11px/10px "Liberation Sans", sans-serif;
    text-align: center;
    color: #555;
    flex: none;
}
.zoom-track {
    width: 77px;
    height: 1px;
    background: #9fa2a8;
    position: relative;
    flex: none;
}
.zoom-track i {
    position: absolute;
    left: 35px;
    top: -5px;
    width: 7px;
    height: 11px;
    background: #f4f5f7;
    border: 1px solid #8a8d93;
    border-radius: 1px 1px 3px 3px;
}

/* taskbar */
.taskbar {
    height: 28px;
    display: flex;
    background: #3b3531;
    color: #e6e6e6;
}
.start {
    width: 38px;
    display: flex;
    align-items: center;
    justify-content: center;
    padding-bottom: 3px;
    flex: none;
}
.search {
    width: 224px;
    flex: none;
    background: #fff;
    display: flex;
    align-items: center;
    padding: 0 0 2px 8px;
    color: #333;
    font-family: "Open Sans", sans-serif;
    font-size: 11.100px;
}
.search-text {
    margin-left: 8px;
}
.pharaoh {
    margin-left: auto;
    margin-right: 4px;
    align-self: flex-start;
}
.tb-icons {
    display: flex;
}
.tb {
    width: 38.700px;
    display: flex;
    align-items: center;
    justify-content: center;
    padding-bottom: 2px;
    flex: none;
}
.word-open {
    background: #5a5551;
    border-bottom: 2px solid #8cc3ee;
    padding-bottom: 0;
}
.chrome-open {
    width: 33px;
    margin-left: 4px;
    border-bottom: 2px solid #8cc3ee;
    padding-bottom: 0;
}
.tray {
    margin-left: auto;
    display: flex;
    align-items: center;
    padding-bottom: 2px;
    font-size: 10.500px;
}
.tray-news {
    margin-right: 19px;
}
.tray-i {
    margin-right: 6px;
}
.tray-i.chev {
    margin-right: 8px;
}
.tray-lang {
    margin: 0 10px 0 2px;
}
.clock {
    display: flex;
    flex-direction: column;
    align-items: center;
    line-height: 15px;
    margin-right: 14px;
}
.tray-note {
    margin-right: 20px;
}
```
